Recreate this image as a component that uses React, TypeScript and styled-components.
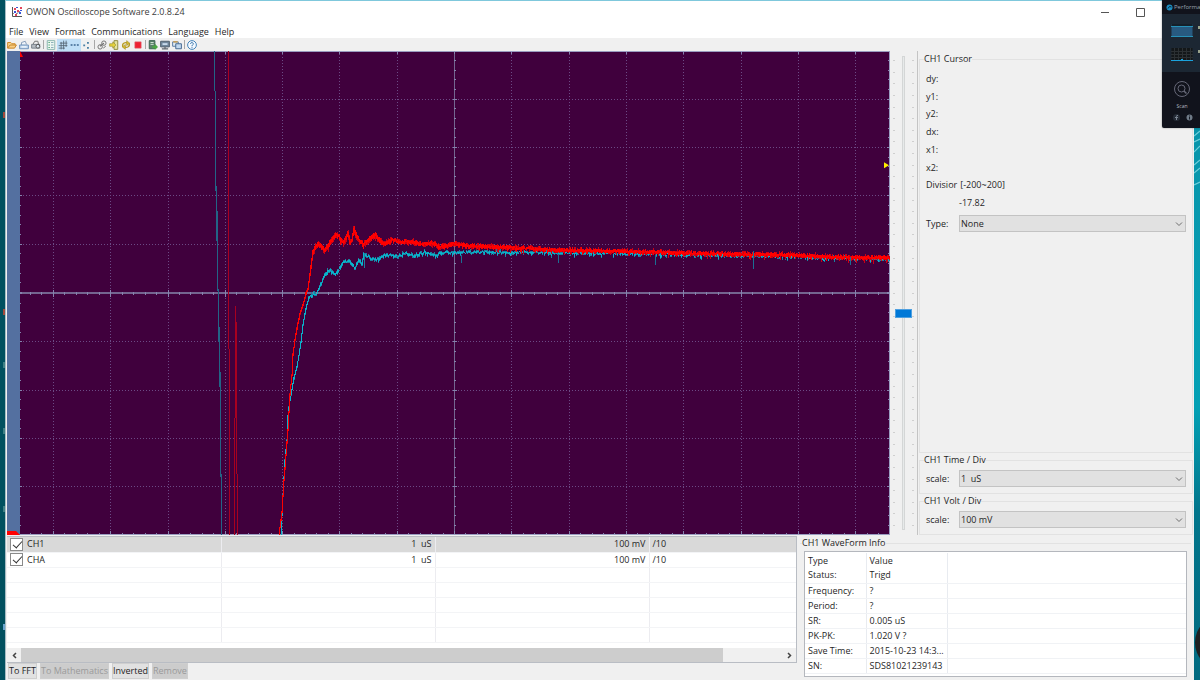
import React from "react";
import styled, { createGlobalStyle, css } from "styled-components";

const Global = createGlobalStyle`
  * { box-sizing: border-box; }
  html, body { margin: 0; padding: 0; }
  body, button, select, input, table {
    font-family: "Open Sans", "Noto Sans", sans-serif;
    font-size: 9px;
    line-height: 12px;
    color: #1f1f1f;
  }
`;

const Desktop = styled.div`
  position: relative;
  display: flex;
  height: 100vh;
  min-height: 480px;
  padding: 0 6px 0 5px;
  overflow: hidden;
  background: linear-gradient(90deg, #01505f 0 50%, transparent 50%),
    linear-gradient(180deg, #0a8fa5 0, #079db2 45%, #03a0b4 60%, #02768c 75%, #016a80 100%);
`;

const Speck = styled.span<{ $top: number; $color: string }>`
  position: absolute;
  left: 3px;
  top: ${(p) => p.$top}px;
  width: 2px;
  height: 6px;
  background: ${(p) => p.$color};
`;

const Ripples = styled.svg`
  position: absolute;
  right: 0;
  top: 128px;
  width: 6px;
  height: 120px;
`;

const Knob = styled.div`
  position: absolute;
  right: -50px;
  top: 615px;
  width: 55px;
  height: 55px;
  border-radius: 50%;
  background: #1e2022;
`;

const Window = styled.main`
  flex: 1;
  min-width: 0;
  display: flex;
  flex-direction: column;
  background: #f0f0f0;
  border-top: 1px solid #7fc8dc;
  border-left: 1px solid #a5bcc4;
`;

const TitleBar = styled.header`
  display: flex;
  align-items: center;
  height: 24px;
  padding: 0 36px 2px 5px;
  background: #fff;
`;

const Title = styled.h1`
  flex: 1;
  margin: 0 0 0 3px;
  font-size: 9px;
  font-weight: 400;
  line-height: 12px;
  color: #3c3c3c;
`;

const CaptionButton = styled.button`
  display: grid;
  place-items: center;
  width: 35px;
  height: 22px;
  padding: 0;
  border: 0;
  background: none;
`;

const MenuBar = styled.nav`
  display: flex;
  gap: 6px;
  height: 13px;
  padding-left: 3px;
  background: #fff;
`;

const MenuButton = styled.button`
  padding: 0;
  border: 0;
  background: none;
`;

const ToolBar = styled.div`
  display: flex;
  align-items: center;
  height: 13px;
`;

const Tool = styled.button<{ $on?: boolean }>`
  display: grid;
  place-items: center;
  width: 12px;
  height: 12px;
  padding: 0;
  border: 0;
  background: ${(p) => (p.$on ? "#bfdff7" : "none")};
`;

const Separator = styled.span`
  width: 1px;
  height: 9px;
  margin: 0 1px;
  background: #a8a8a8;
`;

const Workspace = styled.section`
  flex: 1;
  min-height: 0;
  display: flex;
  padding-left: 1px;
`;

const Gutter = styled.div`
  display: flex;
  align-items: flex-end;
  width: 13px;
  background: #5470a0;
`;

const Scope = styled.svg`
  flex: 1;
  min-width: 0;
  height: 100%;
  display: block;
  background: #40003d;
`;

const SliderArea = styled.div`
  display: flex;
  justify-content: space-between;
  width: 28px;
  padding: 5px 3px;
  border-right: 1px solid #c4c4c4;
`;

const Ticks = styled.div`
  display: flex;
  flex-direction: column;
  justify-content: space-between;
  padding: 4px 0;
`;

const Tick = styled.i`
  width: 2px;
  height: 1px;
  background: #cfcfcf;
`;

const Range = styled.input`
  appearance: none;
  writing-mode: vertical-lr;
  direction: rtl;
  width: 17px;
  height: 100%;
  margin: 0;
  background: none;
  &::-webkit-slider-runnable-track {
    width: 3px;
    height: 100%;
    border: 1px solid #d4d6d6;
    background: #e7eaea;
  }
  &::-webkit-slider-thumb {
    appearance: none;
    width: 17px;
    height: 9px;
    margin-left: -8px;
    border: 1px solid #4fa0e0;
    background: #0078d7;
  }
`;

const Side = styled.aside`
  display: flex;
  flex-direction: column;
  gap: 1px;
  width: 276px;
  padding: 2px 1px 0;
`;

const Group = styled.fieldset<{ $grow?: boolean }>`
  min-width: 0;
  margin: 0;
  padding: 4px 6px 6px;
  border: 1px solid #e2e2e2;
  ${(p) => p.$grow && css`flex: 1; min-height: 0;`}
`;

const Legend = styled.legend`
  margin-left: -2px;
  padding: 0;
  line-height: 12px;
`;

const Readouts = styled.dl`
  display: grid;
  grid-template-rows: repeat(8, 1fr);
  height: 142px;
  margin: 1px 0 3px;
`;

const Readout = styled.div<{ $indent?: boolean }>`
  display: flex;
  align-items: center;
  gap: 3px;
  padding-left: ${(p) => (p.$indent ? 33 : 0)}px;
  dt, dd { margin: 0; }
`;

const Field = styled.label`
  display: grid;
  grid-template-columns: 33px 1fr;
  align-items: center;
`;

const SelectWrap = styled.span`
  display: grid;
  align-items: center;
  > * { grid-area: 1 / 1; }
  > svg { justify-self: end; margin-right: 3px; pointer-events: none; }
`;

const Select = styled.select`
  appearance: none;
  width: 100%;
  height: 17px;
  padding: 0 1px;
  border: 1px solid #c3c3c3;
  border-radius: 0;
  background: #e1e1e1;
`;

const Bottom = styled.section`
  display: flex;
  height: 145px;
  padding: 1px 3px 0 1px;
`;

const Channels = styled.div`
  flex: 1;
  min-width: 0;
  display: flex;
  flex-direction: column;
`;

const ListFrame = styled.div`
  display: flex;
  flex-direction: column;
  height: 127px;
  border: 1px solid #b9bdc4;
  border-width: 1px 1px 1px 0;
  background: #fff;
`;

const ChannelTable = styled.table`
  width: 100%;
  table-layout: fixed;
  border-collapse: collapse;
`;

const ChannelRow = styled.tr<{ $selected?: boolean }>`
  height: 15px;
  background: ${(p) => (p.$selected ? "#d9d9d9" : "#fff")};
  td {
    padding: 0 3px;
    border-right: 1px solid #ececf0;
    border-bottom: 1px solid #f3f4f6;
    text-align: right;
    white-space: pre;
  }
  td:first-child, td:last-child { text-align: left; }
  td:last-child { border-right: 0; }
`;

const CheckLabel = styled.label`
  display: flex;
  align-items: center;
  gap: 4px;
  height: 14px;
`;

const Check = styled.input`
  appearance: none;
  position: relative;
  width: 13px;
  height: 13px;
  margin: 0;
  border: 1px solid #8a8a8a;
  background: #fff;
  &:checked::after {
    content: "";
    position: absolute;
    left: 4px;
    top: 0;
    width: 4px;
    height: 8px;
    border: solid #333;
    border-width: 0 1px 1px 0;
    transform: rotate(42deg);
  }
`;

const ScrollBar = styled.div`
  display: grid;
  grid-template-columns: 14px 701fr 59fr 14px;
  height: 14px;
  margin-top: auto;
  background: #f0f0f0;
`;

const ScrollButton = styled.button<{ $end?: boolean }>`
  display: grid;
  place-items: center;
  grid-column: ${(p) => (p.$end ? 4 : 1)};
  padding: 0;
  border: 0;
  background: none;
`;

const Thumb = styled.span`
  background: #cdcdcd;
`;

const Actions = styled.div`
  display: flex;
  gap: 3px;
  width: max-content;
  padding: 0 0 1px 1px;
`;

const Action = styled.button`
  height: 16px;
  padding: 0;
  border: 1px solid #cfcfcf;
  background: #e1e1e1;
  white-space: nowrap;
  &:disabled { color: #9a9a9a; background: #cccccc; }
`;

const InfoGroup = styled(Group)`
  width: 391px;
  margin: 1px 0 0 3px;
  padding: 2px 4px;
  border-width: 1px 0 0;
`;

const InfoFrame = styled.div`
  height: 126px;
  border: 1px solid #b4b7bd;
  background: #fff;
  padding-top: 1px;
  overflow: hidden;
`;

const InfoTable = styled.table`
  width: 100%;
  table-layout: fixed;
  border-collapse: collapse;
  tr { height: 15px; }
  th, td {
    padding: 0 3px;
    border-right: 1px solid #e8ebf0;
    font-weight: 400;
    text-align: left;
    white-space: nowrap;
  }
  td { border-bottom: 1px solid #f0f2f5; }
  th:last-child, td:last-child { border-right: 0; }
`;

const Widget = styled.aside`
  position: absolute;
  top: 0;
  right: 0;
  width: 38px;
  height: 128px;
  overflow: hidden;
  border-radius: 0 0 0 2px;
  background: #11131c;
  color: #9aa3b0;
  box-shadow: 0 0 2px #0006;
`;

const WidgetHead = styled.div`
  display: flex;
  align-items: center;
  gap: 1px;
  height: 14px;
  padding-left: 4px;
  font-size: 6px;
  line-height: 8px;
  svg { flex: none; }
`;

const WidgetMeters = styled.div`
  display: grid;
  align-content: start;
  gap: 11px;
  height: 58px;
  padding: 10px 0 0 9px;
  background: #1c2733;
`;

const WidgetScan = styled.button`
  display: grid;
  justify-items: center;
  gap: 4px;
  width: 100%;
  padding: 8px 0 4px 2px;
  border: 0;
  background: none;
  color: #b8bbc4;
  font-size: 5px;
  line-height: 8px;
`;

const WidgetLinks = styled.div`
  display: flex;
  gap: 6px;
  padding-left: 11px;
`;

/* ---------- waveform geometry ---------- */

type Point = [number, number];

const PLOT_W = 870;
const PLOT_H = 483;
const CX = 434.5;
const CY = 241.5;
const DX = 57.3;
const DY = 48.3;

const redCurve: Point[] = [
  [259, 483], [262, 460], [264, 428], [266, 403], [268, 378], [270, 343], [272, 323], [273, 303],
  [275, 288], [277, 276], [280, 262], [283, 253], [286, 242], [288, 238], [290, 223], [293, 201],
  [296, 195], [298, 193], [301, 195], [305, 200], [308, 195], [313, 187], [316, 184], [319, 185],
  [321, 190], [324, 191], [328, 182], [330, 191], [332, 189], [334, 178], [337, 186], [340, 190],
  [343, 194], [350, 188], [355, 184], [361, 191], [364, 193], [372, 189], [380, 191], [392, 191],
  [400, 193], [412, 192], [420, 196], [434, 193], [450, 195], [480, 196], [530, 199], [597, 200],
  [663, 202], [713, 203], [763, 204], [813, 206], [870, 207],
];

const cyanCurve: Point[] = [
  [261, 483], [263, 443], [265, 408], [267, 388], [268, 363], [270, 348], [272, 338], [274, 326],
  [277, 315], [279, 303], [281, 290], [283, 273], [286, 256], [289, 245], [293, 243], [297, 242],
  [299, 238], [303, 228], [308, 219], [313, 221], [316, 223], [320, 217], [323, 212], [329, 210],
  [335, 217], [339, 209], [342, 213], [344, 202], [346, 204], [352, 208], [358, 209], [365, 204],
  [378, 205], [385, 202], [395, 205], [405, 201], [416, 204], [426, 201], [434, 202], [460, 201],
  [540, 202], [630, 203], [730, 205], [870, 208],
];

const valueAt = (curve: Point[], x: number) => {
  let i = 1;
  while (i < curve.length - 1 && curve[i][0] < x) i += 1;
  const [x0, y0] = curve[i - 1];
  const [x1, y1] = curve[i];
  return y0 + ((y1 - y0) * (x - x0)) / (x1 - x0);
};

const noise = (n: number) => {
  const v = Math.sin(n * 127.1 + 311.7) * 43758.5453;
  return v - Math.floor(v);
};

const noisyTrace = (curve: Point[], amp: number, jitter: number, seed: number) => {
  let d = "";
  for (let x = curve[0][0]; x < PLOT_W; x += 1) {
    const a = valueAt(curve, x);
    const b = valueAt(curve, x + 1);
    const scale = x < 290 ? 0.4 : 1;
    const shift = scale * jitter * (noise(x * 7 + seed) - 0.5);
    const peak = noise(x * 5 + seed) > 0.88 ? jitter : 0;
    const top = Math.min(a, b) + shift - scale * amp * (0.3 + noise(x + seed));
    const bottom = Math.max(a, b) + shift + scale * (amp * (0.3 + noise(x * 3 + seed)) + peak);
    d += `M${x + 0.5} ${Math.round(top)}V${Math.max(Math.round(bottom), Math.round(top) + 1)}`;
  }
  return d;
};

const range = (from: number, to: number) => Array.from({ length: to - from + 1 }, (_, i) => from + i);
const snap = (v: number) => Math.floor(v) + 0.5;

const gridLines = [
  ...range(-7, 7).filter(Boolean).map((k) => `M${snap(CX + k * DX)} 0V${PLOT_H}`),
  ...range(-4, 4).filter(Boolean).map((k) => `M0 ${snap(CY + k * DY)}H${PLOT_W}`),
].join("");

const tickMarks = [
  ...range(-37, 37).map((k) => {
    const x = snap(CX + (k * DX) / 5);
    const r = k % 5 ? 1 : 3;
    return `M${x} ${CY - r}V${CY + r + 0.5}M${x} 0V${r}M${x} ${PLOT_H}V${PLOT_H - r - 1}`;
  }),
  ...range(-24, 24).map((k) => {
    const y = snap(CY + (k * DY) / 5);
    const r = k % 5 ? 1 : 2;
    return `M${CX - r} ${y}H${CX + r + 0.5}M0 ${y}H${r}M${PLOT_W} ${y}H${PLOT_W - r - 1}`;
  }),
].join("");

const Waveforms = () => (
  <Scope viewBox={`0 0 ${PLOT_W} ${PLOT_H}`} preserveAspectRatio="none" role="img" aria-label="Waveforms">
    <g fill="none" shapeRendering="crispEdges">
      <path d={gridLines} stroke="#6c4a85" strokeDasharray="1 2" />
      <path d={`M0 ${CY}H${PLOT_W}M${CX} 0V${PLOT_H}`} stroke="#746590" />
      <path d={tickMarks} stroke="#8583ad" />
      <path d={`M0 0.5H${PLOT_W}M0 ${PLOT_H - 0.5}H${PLOT_W}M${PLOT_W - 0.5} 0V${PLOT_H}`} stroke="#9a9cc0" />
      <path
        d="M194.500 0V40M195.500 40V140M196.500 135V190M197.500 160V240M198.500 238V290M199.500 275V335M200.500 320V425M201.500 422V483"
        stroke="#236486"
      />
      <path d="M208.500 0V297M209.500 297V483M214.500 483V366M215.500 366V254M216.500 270V422M217.500 422V483" stroke="#a80020" />
      <path d={noisyTrace(cyanCurve, 1.8, 2, 7)} stroke="#1b7f9f" />
      <path d={noisyTrace(cyanCurve, 0.7, 2, 7)} stroke="#08b4cc" />
      <path d={noisyTrace(redCurve, 2.4, 2, 3)} stroke="#cc0014" />
      <path d={noisyTrace(redCurve, 1.9, 1.5, 11)} stroke="#ff0000" />
      <path d="M441.500 204V212M538.500 203V212M635.500 204V214M733.500 200V218M830.500 206V214" stroke="#1b6f93" />
      <path d="M344.500 203V217" stroke="#1b7f9f" />
    </g>
    <path d="M864 111L869 114L864 117Z" fill="#ffee00" />
    <path d="M0 0L3 6H0Z" fill="#ff0000" />
  </Scope>
);

/* ---------- icons ---------- */

const Icon = ({ children }: { children: React.ReactNode }) => (
  <svg width="10" height="10" viewBox="0 0 16 16" fill="none" strokeWidth="1.6" aria-hidden="true">
    {children}
  </svg>
);

const AppLogo = () => (
  <svg width="12" height="12" viewBox="0 0 12 12" aria-hidden="true">
    <path d="M1.500 1V10.500H11" stroke="#555" fill="none" />
    <path d="M2 8L4 6L6 8L8 5L10 7" stroke="#777" fill="none" strokeWidth="0.800" />
    <path d="M3 2h2v2H3zM6 4h2v2H6zM9 1h2v2H9zM4 8h2v2H4z" fill="#e2455a" />
    <path d="M5 1h2v1H5zM3 5h2v2H3zM8 6h2v2H8zM9 4h2v1H9z" fill="#3a55d8" />
  </svg>
);

const tools: { name: string; on?: boolean; icon: React.ReactNode }[][] = [
  [
    { name: "Open", icon: <><path d="M1 13V4H6L8 6H13V8" stroke="#d08a2a" fill="#f6d48c" /><path d="M1 13L5 8H15L12 13Z" fill="#f8cf85" stroke="#c98528" /></> },
    { name: "Save", icon: <><path d="M4 8V4L10 2L12 7" stroke="#8aa0bb" fill="#eef4fa" /><path d="M1 8H15V14H1Z" fill="#c3d9ee" stroke="#6f92bb" /><path d="M4 11H12" stroke="#fff" /></> },
    { name: "Print preview", icon: <><path d="M3 7L6 2H11L12 7" fill="#eee" stroke="#777" /><path d="M1 7H14V13H1Z" fill="#b5bbc1" stroke="#7a838c" /><circle cx="11" cy="10" r="3" fill="#dce8f1" stroke="#555" /></> },
  ],
  [
    { name: "List", icon: <><path d="M2 1H14V15H2Z" fill="#eef8f2" stroke="#8fb8b2" /><path d="M4 4H6M4 8H6M4 12H6" stroke="#3a9a62" /><path d="M8 4H12M8 8H12M8 12H12" stroke="#8fb0ba" /></> },
    { name: "Grid", on: true, icon: <path d="M5 3V15M9 1V15M13 1V11M3 5H15M1 9H15M1 13H11" stroke="#51606f" strokeWidth="1.300" /> },
    { name: "Line", on: true, icon: <path d="M1 8H4M6 8H9M11 8H14" stroke="#3a6690" strokeWidth="2.500" /> },
    { name: "Points", icon: <path d="M2 7H5V10H2ZM8 3H11V6H8ZM8 11H11V14H8Z" fill="#4a80a5" /> },
  ],
  [
    { name: "Connection", icon: <><path d="M5 10L11 5" stroke="#666" strokeWidth="2" /><circle cx="5" cy="11" r="3.500" stroke="#777" /><circle cx="11" cy="5" r="3.500" stroke="#777" /><path d="M10 13L14 10" stroke="#777" /></> },
    { name: "Read", icon: <><path d="M8 1H14V15H8Z" fill="#e5e4a0" stroke="#928e45" /><path d="M1 6H6V3L11 8L6 13V10H1Z" fill="#e6d33c" stroke="#948a25" strokeWidth="1" /></> },
    { name: "Refresh", icon: <><path d="M3 11C1 6 6 3 11 5M13 5C15 10 10 13 5 11" stroke="#b79c22" strokeWidth="2" /><path d="M9 1L14 5L9 9ZM7 7L2 11L7 15Z" fill="#d7b92a" stroke="#9a8420" strokeWidth="0.800" /></> },
    { name: "Stop", icon: <path d="M3 3H13V13H3Z" fill="#ee2233" stroke="#dd5a66" strokeWidth="1" /> },
  ],
  [
    { name: "Export", icon: <><path d="M2 1H11V14H2Z" fill="#59816a" stroke="#3e6653" /><path d="M4 4H9M4 7H9" stroke="#cde0d0" /><path d="M7 9H11V6L16 11L11 16V13H7Z" fill="#49a642" /></> },
    { name: "Display", icon: <><path d="M1 2H15V11H1Z" fill="#71889d" stroke="#53616f" /><path d="M4 5H12V8H4Z" fill="#c7d9ea" /><path d="M3 14H13M8 11V14" stroke="#5f666d" strokeWidth="2" /></> },
    { name: "Layout", icon: <><path d="M1 3H10V10H1Z" fill="#dfeaf4" stroke="#5c7ea5" /><path d="M6 6H15V14H6Z" fill="#c2d9ef" stroke="#4a6d94" /><path d="M2 3H9" stroke="#d19a3c" strokeWidth="2" /></> },
  ],
  [
    { name: "Help", icon: <><circle cx="8" cy="8" r="7" fill="#f3f9ff" stroke="#4584b8" /><path d="M5.500 6C6 3 11 4 10 7C9 8 8 8 8 10M8 11.500V13" stroke="#3471a9" /></> },
  ],
];

const Chevron = () => (
  <svg width="8" height="6" viewBox="0 0 8 6" aria-hidden="true">
    <path d="M1 1.500L4 4.500L7 1.500" fill="none" stroke="#6d6d6d" />
  </svg>
);

const Dropdown = ({ label, value }: { label: string; value: string }) => (
  <Field>
    <span>{label}</span>
    <SelectWrap>
      <Select defaultValue={value}>
        <option>{value}</option>
      </Select>
      <Chevron />
    </SelectWrap>
  </Field>
);

const TickColumn = () => (
  <Ticks>
    {range(0, 40).map((i) => <Tick key={i} />)}
  </Ticks>
);

const channels = ["CH1", "CHA"];
const info = [
  ["Status:", "Trigd"],
  ["Frequency:", "?"],
  ["Period:", "?"],
  ["SR:", "0.005 uS"],
  ["PK-PK:", "1.020 V ?"],
  ["Save Time:", "2015-10-23 14:3..."],
  ["SN:", "SDS81021239143"],
];

export default function App() {
  return (
    <>
      <Global />
      <Desktop>
        {[112, 309].map((t) => <Speck key={t} $top={t} $color="#a04a3c" />)}
        {[362, 428, 506].map((t) => <Speck key={t} $top={t} $color="#3f7f84" />)}
        <Speck $top={624} $color="#6aa5d0" />
        <Window>
          <TitleBar>
            <AppLogo />
            <Title>OWON Oscilloscope Software 2.0.8.24</Title>
            <CaptionButton aria-label="Minimize">
              <svg width="9" height="9"><path d="M0 4.500H8" stroke="#555" /></svg>
            </CaptionButton>
            <CaptionButton aria-label="Maximize">
              <svg width="9" height="9"><path d="M0.500 0.500H8.500V8.500H0.500Z" fill="none" stroke="#555" /></svg>
            </CaptionButton>
          </TitleBar>
          <MenuBar>
            {["File", "View", "Format", "Communications", "Language", "Help"].map((m) => (
              <MenuButton key={m}>{m}</MenuButton>
            ))}
          </MenuBar>
          <ToolBar>
            {tools.map((group, i) => (
              <React.Fragment key={i}>
                {i > 0 && <Separator />}
                {group.map((t) => (
                  <Tool key={t.name} $on={t.on} aria-label={t.name}>
                    <Icon>{t.icon}</Icon>
                  </Tool>
                ))}
              </React.Fragment>
            ))}
          </ToolBar>
          <Workspace>
            <Gutter>
              <svg width="13" height="4" aria-hidden="true"><path d="M0 0H9L13 4H0Z" fill="#ff0000" /></svg>
            </Gutter>
            <Waveforms />
            <SliderArea>
              <TickColumn />
              <Range type="range" min={-200} max={200} step={0.01} defaultValue={-17.82} aria-label="Division" />
              <TickColumn />
            </SliderArea>
            <Side>
              <Group $grow>
                <Legend>CH1 Cursor</Legend>
                <Readouts>
                  {["dy:", "y1:", "y2:", "dx:", "x1:", "x2:"].map((r) => (
                    <Readout key={r}><dt>{r}</dt></Readout>
                  ))}
                  <Readout><dt>Divisior</dt><dd>[-200~200]</dd></Readout>
                  <Readout $indent><dd>-17.82</dd></Readout>
                </Readouts>
                <Dropdown label="Type:" value="None" />
              </Group>
              <Group>
                <Legend>CH1 Time / Div</Legend>
                <Dropdown label="scale:" value={"1\u00a0 uS"} />
              </Group>
              <Group>
                <Legend>CH1 Volt / Div</Legend>
                <Dropdown label="scale:" value="100 mV" />
              </Group>
            </Side>
          </Workspace>
          <Bottom>
            <Channels>
              <ListFrame>
                <ChannelTable>
                  <colgroup>
                    <col width="214" /><col width="214" /><col width="214" /><col />
                  </colgroup>
                  <tbody>
                    {channels.map((c, i) => (
                      <ChannelRow key={c} $selected={i === 0}>
                        <td>
                          <CheckLabel><Check type="checkbox" defaultChecked />{c}</CheckLabel>
                        </td>
                        <td>{"1  uS"}</td>
                        <td>100 mV</td>
                        <td>/10</td>
                      </ChannelRow>
                    ))}
                    {range(1, 5).map((i) => (
                      <ChannelRow key={i}><td /><td /><td /><td /></ChannelRow>
                    ))}
                  </tbody>
                </ChannelTable>
                <ScrollBar>
                  <ScrollButton aria-label="Scroll left">
                    <svg width="5" height="7"><path d="M4 1L1.500 3.500L4 6" fill="none" stroke="#444" strokeWidth="1.500" /></svg>
                  </ScrollButton>
                  <Thumb />
                  <ScrollButton $end aria-label="Scroll right">
                    <svg width="5" height="7"><path d="M1 1L3.500 3.500L1 6" fill="none" stroke="#444" strokeWidth="1.500" /></svg>
                  </ScrollButton>
                </ScrollBar>
              </ListFrame>
              <Actions>
                <Action>To FFT</Action>
                <Action disabled>To Mathematics</Action>
                <Action>Inverted</Action>
                <Action disabled>Remove</Action>
              </Actions>
            </Channels>
            <InfoGroup>
              <Legend>CH1 WaveForm Info</Legend>
              <InfoFrame>
                <InfoTable>
                  <colgroup>
                    <col width="61" /><col width="81" /><col />
                  </colgroup>
                  <thead>
                    <tr><th>Type</th><th>Value</th><th /></tr>
                  </thead>
                  <tbody>
                    {info.map(([k, v]) => (
                      <tr key={k}><td>{k}</td><td>{v}</td><td /></tr>
                    ))}
                  </tbody>
                </InfoTable>
              </InfoFrame>
            </InfoGroup>
          </Bottom>
        </Window>
        <Ripples viewBox="0 0 6 120" aria-hidden="true">
          <path d="M0 8L6 3M0 14L6 11M0 24L6 18M0 37L6 32M0 45L6 40M0 57L6 54" stroke="#6fcfdb" strokeWidth="1.200" />
        </Ripples>
        <Knob />
        <Widget>
          <WidgetHead>
            <svg width="7" height="7" viewBox="0 0 7 7" aria-hidden="true">
              <circle cx="3.500" cy="3.500" r="3" fill="#1d8fc4" />
              <path d="M2 4.500L3.500 2.500L5.500 3" stroke="#0b2635" fill="none" />
            </svg>
            Performa
          </WidgetHead>
          <WidgetMeters>
            <svg width="29" height="13" aria-hidden="true">
              <path d="M0.500 0H21.500V12H0.500Z" fill="#285a80" />
              <path d="M0.500 0H21.500V2H0.500Z" fill="#14202a" />
              <path d="M0 2.500H22M0 12.500H22" stroke="#2791b8" />
              <path d="M28 2V5" stroke="#9aa38c" strokeWidth="2" />
            </svg>
            <svg width="29" height="13" aria-hidden="true">
              <path d="M0.500 0H21.500V12H0.500Z" fill="#131719" />
              <path d="M0 3.500H22M0 6.500H22M0 9.500H22M3.500 0V12M7.500 0V12M11.500 0V12M15.500 0V12M19.500 0V12" stroke="#2b3033" />
              <path d="M0 12.500H22M10 11.500H12" stroke="#1ba2dc" />
              <path d="M28 2V5" stroke="#9aa38c" strokeWidth="2" />
            </svg>
          </WidgetMeters>
          <WidgetScan>
            <svg width="18" height="18" viewBox="0 0 18 18" fill="none" stroke="#666878" aria-hidden="true">
              <circle cx="9" cy="9" r="7.500" />
              <circle cx="8.500" cy="8.500" r="3.500" />
              <path d="M11 11L13.500 13.500" strokeWidth="1.500" />
            </svg>
            Scan
          </WidgetScan>
          <WidgetLinks>
            <svg width="7" height="7" viewBox="0 0 7 7" aria-hidden="true">
              <circle cx="3.500" cy="3.500" r="3.500" fill="#252b36" />
              <path d="M5 1.500H4Q3.500 1.500 3.500 2.500V6M2 3.500H5" stroke="#7d8794" fill="none" />
            </svg>
            <svg width="7" height="7" viewBox="0 0 7 7" aria-hidden="true">
              <circle cx="3.500" cy="3.500" r="3" fill="#6f7a87" />
              <path d="M3.500 1.500V2.500M3.500 3V5.500" stroke="#151a24" />
            </svg>
          </WidgetLinks>
        </Widget>
      </Desktop>
    </>
  );
}
